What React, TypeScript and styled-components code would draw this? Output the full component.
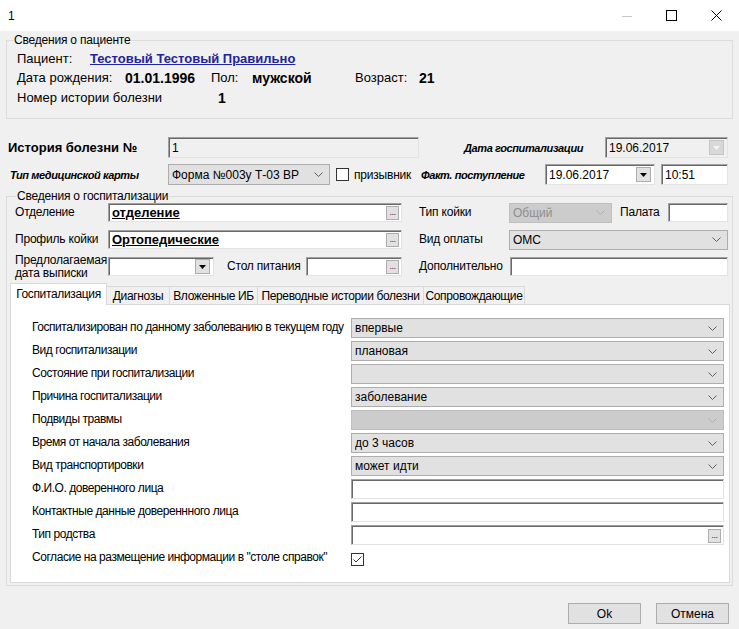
import React from 'react';
import styled, { createGlobalStyle } from 'styled-components';

const Global = createGlobalStyle`
  html, body { margin: 0; padding: 0; background: #f0f0f0; }
  body { font-family: "Liberation Sans", Arial, sans-serif; font-size: 12px; color: #000; }
  * { box-sizing: border-box; }
`;

const Window = styled.div`
  width: 739px;
  height: 629px;
  display: flex;
  flex-direction: column;
  background: #f0f0f0;
  overflow: hidden;
`;

const TitleBar = styled.div`
  height: 31px;
  flex-shrink: 0;
  background: #fff;
  display: flex;
  align-items: center;
`;

const Title = styled.div`
  flex: 1;
  padding-left: 8px;
  font-size: 12px;
`;

const CaptionButtons = styled.div`
  display: flex;
  height: 100%;
`;

const CaptionButton = styled.div`
  width: 45px;
  height: 100%;
  display: flex;
  align-items: center;
  justify-content: center;
`;

const Body = styled.div`
  flex: 1;
  display: flex;
  flex-direction: column;
  padding: 3px 6px 0 6px;
`;

const GroupBox = styled.fieldset<{ $pad: string }>`
  margin: 0;
  min-width: 0;
  border: 1px solid #dcdcdc;
  padding: ${p => p.$pad};
`;

const GroupLegend = styled.legend`
  margin-left: 6px;
  padding: 0 1px;
  font-size: 12px;
  line-height: 12px;
  letter-spacing: -0.2px;
  color: #000;
`;

const PatientRows = styled.div`
  display: flex;
  flex-direction: column;
  padding: 3px 0 0 10px;
`;

const InfoRow = styled.div<{ $gapTop?: number }>`
  display: flex;
  align-items: center;
  height: 19px;
  margin-top: ${p => p.$gapTop ?? 0}px;
`;

const InfoLabel = styled.span<{ $w?: number }>`
  width: ${p => (p.$w ? `${p.$w}px` : 'auto')};
  flex-shrink: 0;
  font-size: 13px;
  white-space: nowrap;
`;

const InfoValue = styled.span<{ $w?: number }>`
  width: ${p => (p.$w ? `${p.$w}px` : 'auto')};
  flex-shrink: 0;
  font-size: 14px;
  font-weight: bold;
  white-space: nowrap;
`;

const PatientLink = styled.a`
  font-size: 13px;
  font-weight: bold;
  color: #23239c;
  text-decoration: underline;
  white-space: nowrap;
`;

const HeaderBlock = styled.div`
  display: flex;
  flex-direction: column;
  gap: 6px;
  margin-top: 18px;
  padding-left: 2px;
`;

const HeaderRow = styled.div`
  display: flex;
  align-items: center;
  height: 21px;
`;

const HeaderTitle = styled.div`
  width: 160px;
  flex-shrink: 0;
  font-size: 13px;
  font-weight: bold;
  white-space: nowrap;
`;

const ItalicLabel = styled.div<{ $w: number; $pl?: number }>`
  width: ${p => p.$w}px;
  flex-shrink: 0;
  padding-left: ${p => p.$pl ?? 0}px;
  font-size: 11px;
  font-weight: bold;
  font-style: italic;
  letter-spacing: -0.4px;
  white-space: nowrap;
`;

const TextBox = styled.div<{ $w?: number; $h?: number; $readonly?: boolean; $ml?: number }>`
  width: ${p => (p.$w ? `${p.$w}px` : 'auto')};
  height: ${p => p.$h ?? 20}px;
  flex-shrink: 0;
  margin-left: ${p => p.$ml ?? 0}px;
  display: flex;
  align-items: center;
  padding: 0 2px 0 3px;
  background: ${p => (p.$readonly ? '#f0f0f0' : '#fff')};
  border: 1px solid;
  border-color: #a0a0a0 #e3e3e3 #e3e3e3 #a0a0a0;
  box-shadow: inset 1px 1px 0 #696969;
  font-size: 12px;
  white-space: nowrap;
  overflow: hidden;
`;

const FieldText = styled.span<{ $strong?: boolean }>`
  flex: 1;
  font-size: ${p => (p.$strong ? 13 : 12)}px;
  font-weight: ${p => (p.$strong ? 'bold' : 'normal')};
  text-decoration: ${p => (p.$strong ? 'underline' : 'none')};
  overflow: hidden;
`;

const DotsButton = styled.div`
  width: 13px;
  height: 14px;
  flex-shrink: 0;
  margin-top: 1px;
  background: #e1e1e1;
  border: 1px solid #adadad;
  display: flex;
  align-items: flex-end;
  justify-content: center;
  font-size: 9px;
  line-height: 9px;
  padding-bottom: 2px;
  color: #1c1c6a;
  letter-spacing: -0.5px;
`;

const DropButton = styled.div<{ $disabled?: boolean }>`
  width: 15px;
  height: 15px;
  flex-shrink: 0;
  margin-right: 1px;
  display: flex;
  align-items: center;
  justify-content: center;
  background: ${p => (p.$disabled ? '#d8d8d8' : '#e1e1e1')};
  border: 1px solid ${p => (p.$disabled ? '#c6c6c6' : '#adadad')};
`;

const ComboBox = styled.div<{ $w?: number; $h?: number; $disabled?: boolean }>`
  width: ${p => (p.$w ? `${p.$w}px` : 'auto')};
  height: ${p => p.$h ?? 20}px;
  flex-shrink: 0;
  display: flex;
  align-items: center;
  padding: 0 6px 0 3px;
  background: ${p => (p.$disabled ? '#cccccc' : '#e1e1e1')};
  border: 1px solid ${p => (p.$disabled ? '#bfbfbf' : '#adadad')};
  color: ${p => (p.$disabled ? '#8e8e8e' : '#000')};
  font-size: 12px;
  white-space: nowrap;
`;

const ComboText = styled.span`
  flex: 1;
  overflow: hidden;
`;

const CheckBox = styled.div<{ $ml?: number }>`
  width: 13px;
  height: 13px;
  flex-shrink: 0;
  margin-left: ${p => p.$ml ?? 0}px;
  background: #fff;
  border: 1px solid #333;
  display: flex;
  align-items: center;
  justify-content: center;
`;

const CheckCaption = styled.span<{ $w: number }>`
  width: ${p => p.$w}px;
  flex-shrink: 0;
  padding-left: 5px;
  font-size: 12px;
  letter-spacing: -0.2px;
  white-space: nowrap;
`;

const HospitalBlock = styled.div`
  margin-top: 5px;
`;

const FormRows = styled.div`
  display: flex;
  flex-direction: column;
  gap: 8px;
  padding: 1px 0 0 5px;
`;

const FormRow = styled.div`
  display: flex;
  align-items: center;
  height: 19px;
`;

const FormLabel = styled.div<{ $w: number; $pl?: number; $wrap?: boolean }>`
  width: ${p => p.$w}px;
  flex-shrink: 0;
  padding-left: ${p => p.$pl ?? 0}px;
  font-size: 12px;
  line-height: 13px;
  letter-spacing: -0.2px;
  white-space: ${p => (p.$wrap ? 'normal' : 'nowrap')};
`;

const TabStrip = styled.div`
  display: flex;
  align-items: flex-end;
  height: 21px;
  margin-top: 7px;
`;

const Tab = styled.div<{ $active?: boolean; $w: number }>`
  position: relative;
  z-index: ${p => (p.$active ? 1 : 0)};
  width: ${p => p.$w}px;
  height: ${p => (p.$active ? 22 : 18)}px;
  margin-bottom: ${p => (p.$active ? -1 : 0)}px;
  padding-top: ${p => (p.$active ? 3 : 2)}px;
  text-align: center;
  background: ${p => (p.$active ? '#fff' : '#f0f0f0')};
  border: 1px solid #d9d9d9;
  border-bottom: none;
  margin-left: ${p => (p.$active ? 0 : -1)}px;
  font-size: 12px;
  letter-spacing: -0.35px;
  white-space: nowrap;
`;

const TabPanel = styled.div`
  display: grid;
  grid-template-columns: 319px 373px;
  grid-auto-rows: 20px;
  row-gap: 3px;
  padding: 13px 0 14px 21px;
  background: #fff;
  border: 1px solid #d9d9d9;
`;

const PanelLabel = styled.div`
  display: flex;
  align-items: center;
  padding-bottom: 2px;
  font-size: 12px;
  letter-spacing: -0.45px;
  white-space: nowrap;
`;

const PanelCheckCell = styled.div`
  display: flex;
  align-items: flex-start;
  padding-top: 5px;
`;

const Footer = styled.div`
  display: flex;
  justify-content: flex-end;
  gap: 15px;
  margin-top: 17px;
  padding-right: 4px;
`;

const DialogButton = styled.div`
  width: 73px;
  height: 21px;
  display: flex;
  align-items: center;
  justify-content: center;
  background: #e1e1e1;
  border: 1px solid #adadad;
  font-size: 12px;
`;

const Chevron = ({ light }: { light?: boolean }) => (
  <svg width="9" height="5" viewBox="0 0 9 5">
    <polyline points="0.5,0.5 4.5,4.5 8.5,0.5" fill="none" stroke={light ? '#b0b0b0' : '#606060'} strokeWidth="1" />
  </svg>
);

const Triangle = ({ light }: { light?: boolean }) => (
  <svg width="7" height="4" viewBox="0 0 7 4">
    <polygon points="0,0 7,0 3.5,4" fill={light ? '#f4f4f4' : '#000'} />
  </svg>
);

const CheckMark = () => (
  <svg width="11" height="11" viewBox="0 0 11 11">
    <polyline points="1.5,5.5 4,8 9.5,2.5" fill="none" stroke="#333" strokeWidth="1" />
  </svg>
);

type PanelRow =
  | { label: string; kind: 'combo'; value: string; disabled?: boolean }
  | { label: string; kind: 'text'; dots?: boolean }
  | { label: string; kind: 'check' };

const panelRows: PanelRow[] = [
  { label: 'Госпитализирован по данному заболеванию в текущем году', kind: 'combo', value: 'впервые' },
  { label: 'Вид госпитализации', kind: 'combo', value: 'плановая' },
  { label: 'Состояние при госпитализации', kind: 'combo', value: '' },
  { label: 'Причина госпитализации', kind: 'combo', value: 'заболевание' },
  { label: 'Подвиды травмы', kind: 'combo', value: '', disabled: true },
  { label: 'Время от начала заболевания', kind: 'combo', value: 'до 3 часов' },
  { label: 'Вид транспортировки', kind: 'combo', value: 'может идти' },
  { label: 'Ф.И.О. доверенного лица', kind: 'text' },
  { label: 'Контактные данные довереннного лица', kind: 'text' },
  { label: 'Тип родства', kind: 'text', dots: true },
  { label: 'Согласие на размещение информации в "столе справок"', kind: 'check' },
];

const tabs: { title: string; w: number }[] = [
  { title: 'Госпитализация', w: 97 },
  { title: 'Диагнозы', w: 64 },
  { title: 'Вложенные ИБ', w: 89 },
  { title: 'Переводные истории болезни', w: 167 },
  { title: 'Сопровождающие', w: 102 },
];

export default function App() {
  return (
    <>
      <Global />
      <Window>
        <TitleBar>
          <Title>1</Title>
          <CaptionButtons>
            <CaptionButton>
              <svg width="10" height="10" viewBox="0 0 10 10">
                <line x1="0" y1="5.5" x2="10" y2="5.5" stroke="#c4c4c4" strokeWidth="1" />
              </svg>
            </CaptionButton>
            <CaptionButton>
              <svg width="11" height="11" viewBox="0 0 11 11">
                <rect x="0.5" y="0.5" width="10" height="10" fill="none" stroke="#000" strokeWidth="1" />
              </svg>
            </CaptionButton>
            <CaptionButton>
              <svg width="11" height="11" viewBox="0 0 11 11">
                <line x1="0.5" y1="0.5" x2="10.5" y2="10.5" stroke="#000" strokeWidth="1" />
                <line x1="10.5" y1="0.5" x2="0.5" y2="10.5" stroke="#000" strokeWidth="1" />
              </svg>
            </CaptionButton>
          </CaptionButtons>
        </TitleBar>

        <Body>
          <GroupBox $pad="0 0 11px 0">
            <GroupLegend>Сведения о пациенте</GroupLegend>
            <PatientRows>
              <InfoRow>
                <InfoLabel $w={73}>Пациент:</InfoLabel>
                <PatientLink>Тестовый Тестовый Правильно</PatientLink>
              </InfoRow>
              <InfoRow>
                <InfoLabel $w={108}>Дата рождения:</InfoLabel>
                <InfoValue $w={86}>01.01.1996</InfoValue>
                <InfoLabel $w={41}>Пол:</InfoLabel>
                <InfoValue $w={103}>мужской</InfoValue>
                <InfoLabel $w={64}>Возраст:</InfoLabel>
                <InfoValue>21</InfoValue>
              </InfoRow>
              <InfoRow $gapTop={1}>
                <InfoLabel $w={201}>Номер истории болезни</InfoLabel>
                <InfoValue>1</InfoValue>
              </InfoRow>
            </PatientRows>
          </GroupBox>

          <HeaderBlock>
            <HeaderRow>
              <HeaderTitle>История болезни №</HeaderTitle>
              <TextBox $w={251} $h={21} $readonly>
                <FieldText>1</FieldText>
              </TextBox>
              <ItalicLabel $w={186} $pl={45}>Дата госпитализации</ItalicLabel>
              <TextBox $w={123} $h={21} $readonly>
                <FieldText>19.06.2017</FieldText>
                <DropButton $disabled>
                  <Triangle light />
                </DropButton>
              </TextBox>
            </HeaderRow>
            <HeaderRow>
              <ItalicLabel $w={160} $pl={2}>Тип медицинской карты</ItalicLabel>
              <ComboBox $w={162} $h={21}>
                <ComboText>Форма №003у Т-03 ВР</ComboText>
                <Chevron />
              </ComboBox>
              <CheckBox $ml={6} />
              <CheckCaption $w={72}>призывник</CheckCaption>
              <ItalicLabel $w={124}>Факт. поступление</ItalicLabel>
              <TextBox $w={110} $h={21}>
                <FieldText>19.06.2017</FieldText>
                <DropButton>
                  <Triangle />
                </DropButton>
              </TextBox>
              <TextBox $w={67} $h={21} $ml={6}>
                <FieldText>10:51</FieldText>
              </TextBox>
            </HeaderRow>
          </HeaderBlock>

          <HospitalBlock>
            <GroupBox $pad="0 2px 2px 3px">
              <GroupLegend>Сведения о госпитализации</GroupLegend>
              <FormRows>
                <FormRow>
                  <FormLabel $w={93}>Отделение</FormLabel>
                  <TextBox $w={294} $h={19}>
                    <FieldText $strong>отделение</FieldText>
                    <DotsButton>...</DotsButton>
                  </TextBox>
                  <FormLabel $w={107} $pl={17}>Тип койки</FormLabel>
                  <ComboBox $w={103} $disabled>
                    <ComboText>Общий</ComboText>
                    <Chevron light />
                  </ComboBox>
                  <FormLabel $w={56} $pl={8}>Палата</FormLabel>
                  <TextBox $w={60} $h={19} />
                </FormRow>
                <FormRow>
                  <FormLabel $w={93}>Профиль койки</FormLabel>
                  <TextBox $w={294} $h={19}>
                    <FieldText $strong>Ортопедические</FieldText>
                    <DotsButton>...</DotsButton>
                  </TextBox>
                  <FormLabel $w={107} $pl={17}>Вид оплаты</FormLabel>
                  <ComboBox $w={219}>
                    <ComboText>ОМС</ComboText>
                    <Chevron />
                  </ComboBox>
                </FormRow>
                <FormRow>
                  <FormLabel $w={93} $wrap>Предлолагаемая дата выписки</FormLabel>
                  <TextBox $w={106} $h={19}>
                    <FieldText />
                    <DropButton>
                      <Triangle />
                    </DropButton>
                  </TextBox>
                  <FormLabel $w={92} $pl={13}>Стол питания</FormLabel>
                  <TextBox $w={96} $h={19}>
                    <FieldText />
                    <DotsButton>...</DotsButton>
                  </TextBox>
                  <FormLabel $w={108} $pl={17}>Дополнительно</FormLabel>
                  <TextBox $w={218} $h={19} />
                </FormRow>
              </FormRows>

              <TabStrip>
                {tabs.map((t, i) => (
                  <Tab key={t.title} $active={i === 0} $w={t.w}>
                    {t.title}
                  </Tab>
                ))}
              </TabStrip>
              <TabPanel>
                {panelRows.map(r => (
                  <React.Fragment key={r.label}>
                    <PanelLabel>{r.label}</PanelLabel>
                    {r.kind === 'combo' && (
                      <ComboBox $disabled={r.disabled}>
                        <ComboText>{r.value}</ComboText>
                        <Chevron light={r.disabled} />
                      </ComboBox>
                    )}
                    {r.kind === 'text' && (
                      <TextBox>
                        <FieldText />
                        {r.dots && <DotsButton>...</DotsButton>}
                      </TextBox>
                    )}
                    {r.kind === 'check' && (
                      <PanelCheckCell>
                        <CheckBox>
                          <CheckMark />
                        </CheckBox>
                      </PanelCheckCell>
                    )}
                  </React.Fragment>
                ))}
              </TabPanel>
            </GroupBox>
          </HospitalBlock>

          <Footer>
            <DialogButton>Ok</DialogButton>
            <DialogButton>Отмена</DialogButton>
          </Footer>
        </Body>
      </Window>
    </>
  );
}
